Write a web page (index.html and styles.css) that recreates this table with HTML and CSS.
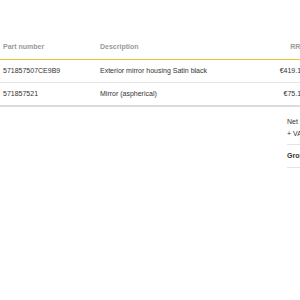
FILE: index.html
```html
<!DOCTYPE html>
<html>
<head>
<meta charset="utf-8">
<link rel="stylesheet" href="styles.css">
</head>
<body>
<div class="page">
  <div class="table">
    <div class="row head">
      <div class="c part">Part number</div>
      <div class="c desc">Description</div>
      <div class="c price">RRP</div>
    </div>
    <div class="row">
      <div class="c part">571857507CE9B9</div>
      <div class="c desc">Exterior mirror housing Satin black</div>
      <div class="c price">€419.10</div>
    </div>
    <div class="row last">
      <div class="c part">571857521</div>
      <div class="c desc">Mirror (aspherical)</div>
      <div class="c price">€75.10</div>
    </div>
  </div>
  <div class="summary">
    <div class="sum-top">
      <div class="line">Net</div>
      <div class="line">+ VAT</div>
    </div>
    <div class="sum-gross">Gross</div>
  </div>
</div>
</body>
</html>
```
FILE: styles.css
```css
html, body {
  margin: 0;
  padding: 0;
  overflow: hidden;
  background: #fff;
}
.page {
  width: 308px;
  padding-top: 35px;
  font-family: "Liberation Sans", Arial, sans-serif;
  font-size: 7px;
  line-height: 8px;
  color: #333;
}
.row {
  display: grid;
  grid-template-columns: 97px 1fr 60px;
  border-bottom: 1px solid #e4e4e4;
}
.c {
  padding: 7px 0 7px 3px;
  white-space: nowrap;
}
.price {
  text-align: right;
  padding-right: 3px;
}
.head {
  border-bottom: 1px solid #f0c43a;
}
.head .c {
  padding-top: 8px;
  padding-bottom: 8px;
  color: #9a9a9a;
  font-weight: bold;
}
.row.last {
  border-bottom: 2px solid #dcdcdc;
}
.summary {
  margin-left: 287px;
  margin-top: 11px;
}
.sum-top {
  display: flex;
  flex-direction: column;
  gap: 4px;
  padding-bottom: 6px;
  border-bottom: 1px solid #e4e4e4;
}
.sum-gross {
  padding: 7px 0;
  font-weight: bold;
  border-bottom: 1px solid #e4e4e4;
}
```
